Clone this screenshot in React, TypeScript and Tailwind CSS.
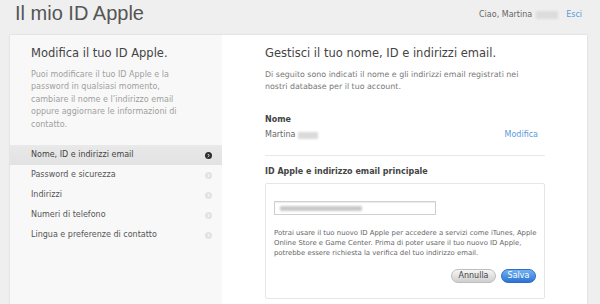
const NAV = [
  "Nome, ID e indirizzi email",
  "Password e sicurezza",
  "Indirizzi",
  "Numeri di telefono",
  "Lingua e preferenze di contatto",
];

function Chevron({ active }: { active: boolean }) {
  return (
    <span
      className={
        active
          ? "flex h-[7px] w-[7px] items-center justify-center rounded-full bg-[#2e2e2e]"
          : "flex h-[7px] w-[7px] items-center justify-center rounded-full bg-[#e2e2e2]"
      }
    >
      <svg width="5" height="5" viewBox="0 0 10 10">
        <path d="M4 2.5 L6.5 5 L4 7.5" fill="none" stroke="#fff" strokeWidth="1.8" strokeLinecap="round" strokeLinejoin="round" />
      </svg>
    </span>
  );
}

function Blur({ w, h = "h-[6px]", color = "bg-[#d4d4d4]" }: { w: string; h?: string; color?: string }) {
  return <span className={`inline-block ${w} ${h} ${color} rounded-[1px] blur-[1px] align-middle`} />;
}

export default function App() {
  return (
    <div className="h-[304px] w-[600px] overflow-hidden bg-[#efefef] font-['DejaVu_Sans',sans-serif]">
      {/* Intestazione */}
      <div className="flex h-[35px] items-start justify-between pl-[15px] pr-[18px]">
        <h1 className="mt-[1px] font-['Liberation_Sans',sans-serif] text-[20px] leading-[24px] text-[#555]">
          Il mio ID Apple
        </h1>
        <div className="mt-[9px] flex items-center text-[8px] leading-[12px] text-[#666]">
          <span>Ciao, Martina</span>
          <span className="ml-[4px] flex">
            <Blur w="w-[22px]" h="h-[8px]" color="bg-[#dcdcdc]" />
          </span>
          <a className="ml-[8px] text-[#5b9bdc]">Esci</a>
        </div>
      </div>

      {/* Pannello */}
      <div className="ml-[10px] flex h-[300px] w-[577px] shadow-[0_0_2px_rgba(0,0,0,0.12)]">
        {/* Colonna sinistra */}
        <div className="w-[212px] shrink-0 bg-[#f8f8f8] pt-[10px]">
          <div className="pl-[21px] pr-[12px]">
            <h2 className="text-[11.5px] leading-[16px] text-[#444]">Modifica il tuo ID Apple.</h2>
            <p className="mt-[8px] whitespace-nowrap text-[8px] leading-[12.4px] text-[#a0a0a0]">
              Puoi modificare il tuo ID Apple e la
              <br />
              password in qualsiasi momento,
              <br />
              cambiare il nome e l’indirizzo email
              <br />
              oppure aggiornare le informazioni di
              <br />
              contatto.
            </p>
          </div>
          <ul className="mt-[14px]">
            {NAV.map((item, i) => (
              <li
                key={item}
                className={
                  i === 0
                    ? "flex h-[20px] items-center justify-between bg-gradient-to-b from-[#e9e9e9] to-[#e2e2e2] pl-[21px] pr-[10px] text-[8px] text-[#444]"
                    : "flex h-[20px] items-center justify-between pl-[21px] pr-[10px] text-[8px] text-[#555]"
                }
              >
                <span>{item}</span>
                <Chevron active={i === 0} />
              </li>
            ))}
          </ul>
        </div>

        {/* Colonna destra */}
        <div className="min-w-0 flex-1 bg-white pl-[43px] pt-[10px]">
          <div className="w-[280px]">
            <h2 className="text-[11.5px] leading-[16px] text-[#444]">
              Gestisci il tuo nome, ID e indirizzi email.
            </h2>
            <p className="mt-[8px] whitespace-nowrap text-[7.9px] leading-[12px] text-[#777]">
              Di seguito sono indicati il nome e gli indirizzi email registrati nei
              <br />
              nostri database per il tuo account.
            </p>

            <div className="mt-[21px] text-[8px] font-bold leading-[12px] text-[#444]">Nome</div>
            <div className="mt-[3px] flex items-center justify-between pr-[7px] text-[8px] leading-[12px]">
              <span className="flex items-center gap-[3px] text-[#666]">
                Martina
                <Blur w="w-[20px]" h="h-[7px]" color="bg-[#dadada]" />
              </span>
              <a className="text-[#5b9bdc]">Modifica</a>
            </div>

            <div className="mt-[14px] h-px bg-[#e8e8e8]" />

            <div className="mt-[10px] text-[8px] font-bold leading-[12px] text-[#444]">
              ID Apple e indirizzo email principale
            </div>

            <div className="mt-[5px] rounded-[2px] border border-[#e6e6e6] px-[8px] pb-[15px] pt-[17px]">
              <div className="flex h-[14px] w-[162px] items-center border border-[#d0d0d0] bg-white pl-[5px] shadow-[inset_0_1px_1px_rgba(0,0,0,0.08)]">
                <Blur w="w-[82px]" h="h-[5px]" color="bg-[#c9c9c9]" />
              </div>
              <p className="mt-[13px] whitespace-nowrap text-[6.9px] leading-[10px] text-[#666]">
                Potrai usare il tuo nuovo ID Apple per accedere a servizi come iTunes, Apple
                <br />
                Online Store e Game Center. Prima di poter usare il tuo nuovo ID Apple,
                <br />
                potrebbe essere richiesta la verifica del tuo indirizzo email.
              </p>
              <div className="mt-[11px] flex justify-end gap-[5px]">
                <button className="h-[14px] w-[45px] rounded-full border border-[#bdbdbd] bg-gradient-to-b from-[#f6f6f6] to-[#cfcfcf] text-[8px] leading-[12px] text-[#444]">
                  Annulla
                </button>
                <button className="h-[14px] w-[35px] rounded-full border border-[#2f6cc4] bg-gradient-to-b from-[#72b2f2] to-[#2b73d3] text-[8px] leading-[12px] text-white">
                  Salva
                </button>
              </div>
            </div>
          </div>
        </div>
      </div>
    </div>
  );
}
